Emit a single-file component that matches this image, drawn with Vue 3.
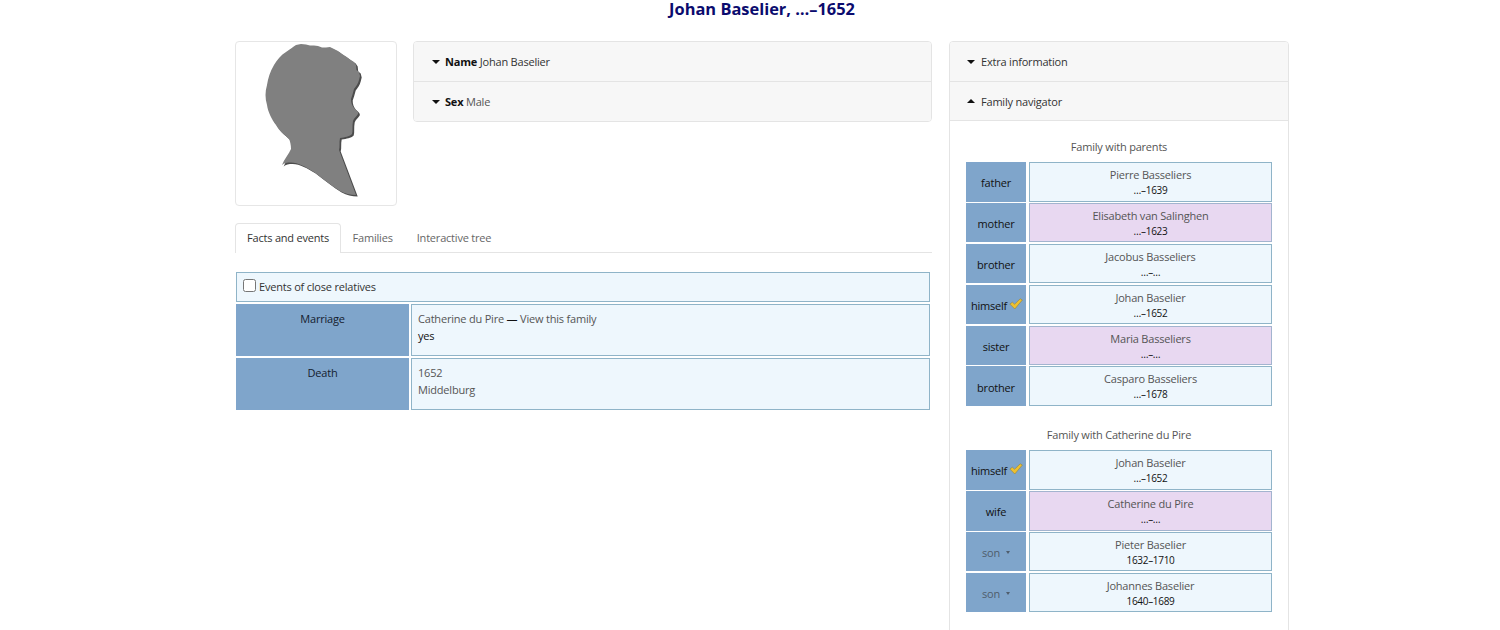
<script setup>
const parents = [
  { role: 'father', name: 'Pierre Basseliers', dates: '…–1639' },
  { role: 'mother', name: 'Elisabeth van Salinghen', dates: '…–1623', female: true },
  { role: 'brother', name: 'Jacobus Basseliers', dates: '…–…' },
  { role: 'himself', name: 'Johan Baselier', dates: '…–1652', self: true },
  { role: 'sister', name: 'Maria Basseliers', dates: '…–…', female: true },
  { role: 'brother', name: 'Casparo Basseliers', dates: '…–1678' },
]
const spouse = [
  { role: 'himself', name: 'Johan Baselier', dates: '…–1652', self: true },
  { role: 'wife', name: 'Catherine du Pire', dates: '…–…', female: true },
  { role: 'son', name: 'Pieter Baselier', dates: '1632–1710', child: true },
  { role: 'son', name: 'Johannes Baselier', dates: '1640–1689', child: true },
]
const families = [
  { title: 'Family with parents', rows: parents },
  { title: 'Family with Catherine du Pire', rows: spouse },
]
const profile = 'M36 5 L41 4 L46 4.5 L50 5.5 L54 5.5 L58 6 L62 7.5 L66 7.5 L70 7 L73 8.5 L78 11 L82 14 L86 16.5 L90 19.5 L94 22 L96 25 L96.5 30 L99 32 L100 36 L99 40 C98 44 96 46 94 49 C93 53 92 56 91 59 C91 63 92 65 94 68 C96 70 99 72 98 74 C96 77 94 78 93 81 C92 86 93 91 92 94 C89 97 85 97 80 98 C79 102 80 107 79 110 L96 155 C90 155 85 153.5 80 151 C72 146 63 139 54 132 C46 127 38 122.5 31 122.5 C27 122.5 24 123 22 125 C24 119 29 114 31 109 C31 105 30 101 29 99 C24 94 19 91 16 85 C12 80 8 72 7 65 C5 58 5 52 7 45 C8 38 10 32 14 25 C17 20 21 15 26 12 C30 9 33 7 36 5 Z'
</script>

<template>
  <div class="page">
    <h1 class="title">Johan Baselier, …–1652</h1>
    <div class="columns">
      <main class="left">
        <div class="top">
          <div class="photo">
            <svg width="110" height="165" viewBox="0 0 110 165">
              <path class="shadow" :d="profile" transform="translate(1.7 1.5)" />
              <path class="head" :d="profile" />
            </svg>
          </div>
          <section class="accordion main-acc">
            <div class="acc-row"><i class="caret"></i><span><b>Name</b> Johan Baselier</span></div>
            <div class="acc-row"><i class="caret"></i><span><b>Sex</b> <span class="muted">Male</span></span></div>
          </section>
        </div>
        <nav class="tabs">
          <span class="tab active">Facts and events</span>
          <span class="tab">Families</span>
          <span class="tab">Interactive tree</span>
        </nav>
        <div class="facts">
          <label class="relatives"><input type="checkbox" /><span>Events of close relatives</span></label>
          <div class="fact">
            <div class="fact-label">Marriage</div>
            <div class="fact-body">
              <div class="muted">Catherine du Pire <span class="dark">—</span> View this family</div>
              <div class="dark">yes</div>
            </div>
          </div>
          <div class="fact">
            <div class="fact-label">Death</div>
            <div class="fact-body muted">
              <div>1652</div>
              <div>Middelburg</div>
            </div>
          </div>
        </div>
      </main>
      <aside class="accordion side">
        <div class="acc-row"><i class="caret"></i><span>Extra information</span></div>
        <div class="acc-row"><i class="caret up"></i><span>Family navigator</span></div>
        <div class="nav">
          <section v-for="f in families" :key="f.title" class="family">
            <div class="family-title">{{ f.title }}</div>
            <div class="family-rows">
              <div v-for="r in f.rows" :key="r.name" class="row">
                <div class="role" :class="{ child: r.child }">
                  <span>{{ r.role }}</span>
                  <svg v-if="r.self" class="check" width="14" height="12" viewBox="0 0 14 12">
                    <path d="M.8 6 L3.4 4.2 L5.6 6.2 L11.2 .8 L13.4 2 L5.8 11 Z" fill="#eec02e" stroke="#8f8346" stroke-width=".6" />
                  </svg>
                  <i v-if="r.child" class="mini-caret"></i>
                </div>
                <div class="person" :class="{ female: r.female }">
                  <div class="person-name">{{ r.name }}</div>
                  <div class="person-dates">{{ r.dates }}</div>
                </div>
              </div>
            </div>
          </section>
        </div>
      </aside>
    </div>
  </div>
</template>

<style>
html, body { height: 630px; overflow: hidden; background: #fff; }
</style>

<style scoped>
.page {
  width: 1054px;
  margin-left: 235px;
  font-family: "Open Sans", "Noto Sans", sans-serif;
  font-size: 11px;
  letter-spacing: -0.2px;
  line-height: 17px;
  color: #212529;
}
.title {
  margin: 0;
  height: 41px;
  text-align: center;
  font-size: 16.4px;
  letter-spacing: 0;
  line-height: 18px;
  font-weight: 700;
  color: #0b0b6e;
}
.columns { display: flex; gap: 17px; align-items: flex-start; }
.left { width: 697px; flex: none; }
.top { display: flex; gap: 16px; align-items: flex-start; }
.photo {
  box-sizing: border-box;
  width: 162px;
  height: 165px;
  border: 1px solid #e6e6e6;
  border-radius: 4px;
  display: flex;
  overflow: hidden;
}
.photo svg { margin: -2px 0 0 24px; flex: none; }
.head { fill: #808080; }
.shadow { fill: #4c4c4c; }
.accordion {
  box-sizing: border-box;
  border: 1px solid #e4e4e4;
  border-radius: 4px;
  background: #fff;
  overflow: hidden;
}
.main-acc { width: 519px; }
.side { width: 340px; height: 640px; }
.acc-row {
  box-sizing: border-box;
  height: 40px;
  padding-left: 18px;
  display: flex;
  align-items: center;
  gap: 6px;
  background: #f7f7f7;
  border-bottom: 1px solid #e4e4e4;
  color: #333;
}
.side .acc-row { padding-left: 17px; }
.acc-row:nth-child(2) { height: 39px; }
.main-acc .acc-row:last-child { border-bottom: 0; }
.main-acc .acc-row { gap: 5px; }
.caret {
  width: 0;
  height: 0;
  border-left: 4px solid transparent;
  border-right: 4px solid transparent;
  border-top: 4px solid #111;
}
.caret.up { border-top: 0; border-bottom: 4px solid #111; }
.acc-row b { color: #111; font-weight: 700; }
.tabs {
  display: flex;
  height: 29px;
  margin-top: 17px;
  border-bottom: 1px solid #e4e4e4;
}
.tab {
  padding: 6px 12px 0;
  color: #666;
  height: 29px;
  box-sizing: border-box;
}
.tab.active {
  color: #333;
  border: 1px solid #e4e4e4;
  border-bottom: 0;
  border-radius: 4px 4px 0 0;
  height: 30px;
  background: #fff;
  padding: 5px 10.5px 0 11px;
}
.facts {
  margin: 19px 2px 0 1px;
  display: flex;
  flex-direction: column;
  gap: 1.6px;
}
.relatives {
  box-sizing: border-box;
  height: 30px;
  display: flex;
  align-items: center;
  gap: 3px;
  padding-left: 6px;
  background: #eef7fd;
  border: 1px solid #8fb4c8;
  color: #333;
}
.relatives input {
  appearance: none;
  width: 13px;
  height: 13px;
  margin: -3px 0 0;
  background: #fff;
  border: 1px solid #767676;
  border-radius: 2.5px;
}
.relatives span { margin-top: -2px; }
.fact { display: flex; gap: 2px; height: 52.6px; }
.fact-label {
  width: 173px;
  text-align: center;
  padding-top: 6px;
  background: #7fa5cb;
  color: #14202e;
  box-sizing: border-box;
}
.fact-body {
  flex: 1;
  box-sizing: border-box;
  padding: 5px 6px 0;
  background: #eef7fd;
  border: 1px solid #8fb4c8;
}
.muted { color: #555; }
.dark { color: #111; }
.nav { padding: 17px 16px 0; }
.family { margin-bottom: 20px; }
.family-title { text-align: center; color: #555; height: 24px; line-height: 17px; }
.family-rows { display: flex; flex-direction: column; gap: 1.3px; }
.row { display: flex; gap: 3px; height: 39.6px; }
.role {
  width: 60px;
  flex: none;
  box-sizing: border-box;
  padding-top: 2px;
  background: #7fa5cb;
  color: #111;
  display: flex;
  align-items: center;
  justify-content: center;
  gap: 2px;
}
.role.child { color: #4f5d6c; gap: 6px; }
.check { flex: none; margin: -3px -2px 0 0; }
.mini-caret {
  width: 0;
  height: 0;
  border-left: 2.5px solid transparent;
  border-right: 2.5px solid transparent;
  border-top: 3px solid #4f5d6c;
}
.person {
  flex: 1;
  box-sizing: border-box;
  text-align: center;
  background: #eef7fd;
  border: 1px solid #8fb4c8;
  padding-top: 3px;
}
.person.female { background: #e8d8f1; border-color: #a3b4cf; }
.person-name { color: #555; line-height: 17px; }
.person-dates { color: #111; font-size: 10px; letter-spacing: -0.3px; line-height: 15px; }
</style>
